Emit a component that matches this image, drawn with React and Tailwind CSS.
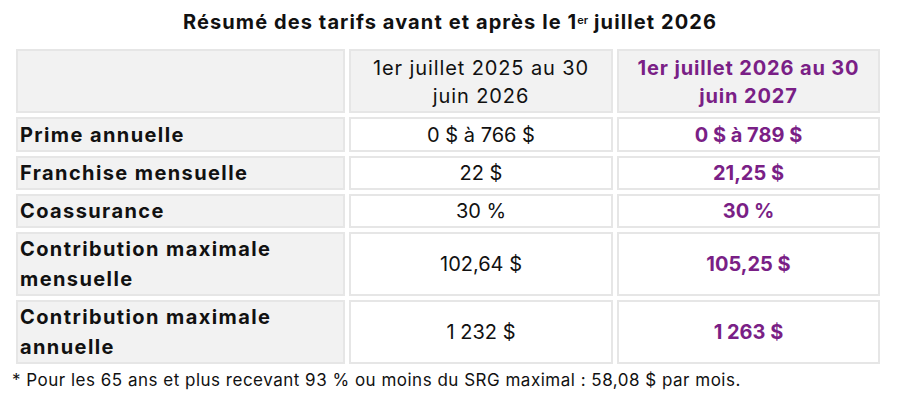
import React from 'react';

const rows = [
    { label: ['Prime annuelle'], before: '0 $ à 766 $', after: '0 $ à 789 $', h: 'h-[35px]' },
    { label: ['Franchise mensuelle'], before: '22 $', after: '21,25 $', h: 'h-[34px]' },
    { label: ['Coassurance'], before: '30 %', after: '30 %', h: 'h-[34px]' },
    { label: ['Contribution maximale', 'mensuelle'], before: '102,64 $', after: '105,25 $', h: 'h-[64px]' },
    { label: ['Contribution maximale', 'annuelle'], before: '1 232 $', after: '1 263 $', h: 'h-[64px]' }
];

const App = () => {
    return (
        <div className="w-[900px] h-[415px] bg-white text-[#111] font-['Inter',sans-serif] overflow-hidden">
            <h1 className="pt-[9px] h-[45px] text-center text-[20px] font-bold leading-[26px] tracking-[1.1px]">
                Résumé des tarifs avant et après le 1<sup className="text-[11px] font-semibold tracking-normal">er</sup> juillet 2026
            </h1>

            <table className="ml-[12px] w-[872px] border-separate border-spacing-[4px] table-fixed">
                <colgroup>
                    <col className="w-[329px]" />
                    <col className="w-[264px]" />
                    <col />
                </colgroup>
                <thead>
                    <tr className="h-[64px]">
                        <th className="bg-[#f2f2f2] border-2 border-[#e6e6e6]"></th>
                        <th className="bg-[#f2f2f2] border-2 border-[#e6e6e6] font-normal text-[20px] leading-[28px] tracking-[0.9px] px-3 pt-[2px]">
                            1er juillet 2025 au 30 juin 2026
                        </th>
                        <th className="bg-[#f2f2f2] border-2 border-[#e6e6e6] font-bold text-[20px] leading-[28px] tracking-[0.85px] text-[#7a1f86] px-3 pt-[2px]">
                            1er juillet 2026 au 30 juin 2027
                        </th>
                    </tr>
                </thead>
                <tbody>
                    {rows.map((row, i) => (
                        <tr key={i} className={row.h}>
                            <td className="bg-[#f2f2f2] border-2 border-[#e6e6e6] px-[2px] font-bold text-[20px] leading-[30px] tracking-[1.4px]">
                                {row.label.map((l, j) => (
                                    <div key={j}>{l}</div>
                                ))}
                            </td>
                            <td className="border-2 border-[#e6e6e6] text-center text-[20px] leading-[28px]">
                                {row.before}
                            </td>
                            <td className="border-2 border-[#e6e6e6] text-center text-[20px] leading-[28px] font-bold text-[#7a1f86]">
                                {row.after}
                            </td>
                        </tr>
                    ))}
                </tbody>
            </table>

            <p className="pl-[12px] text-[17px] leading-[24px] tracking-[0.5px]">
                * Pour les 65 ans et plus recevant 93 % ou moins du SRG maximal : 58,08 $ par mois.
            </p>
        </div>
    );
};

export default App;
